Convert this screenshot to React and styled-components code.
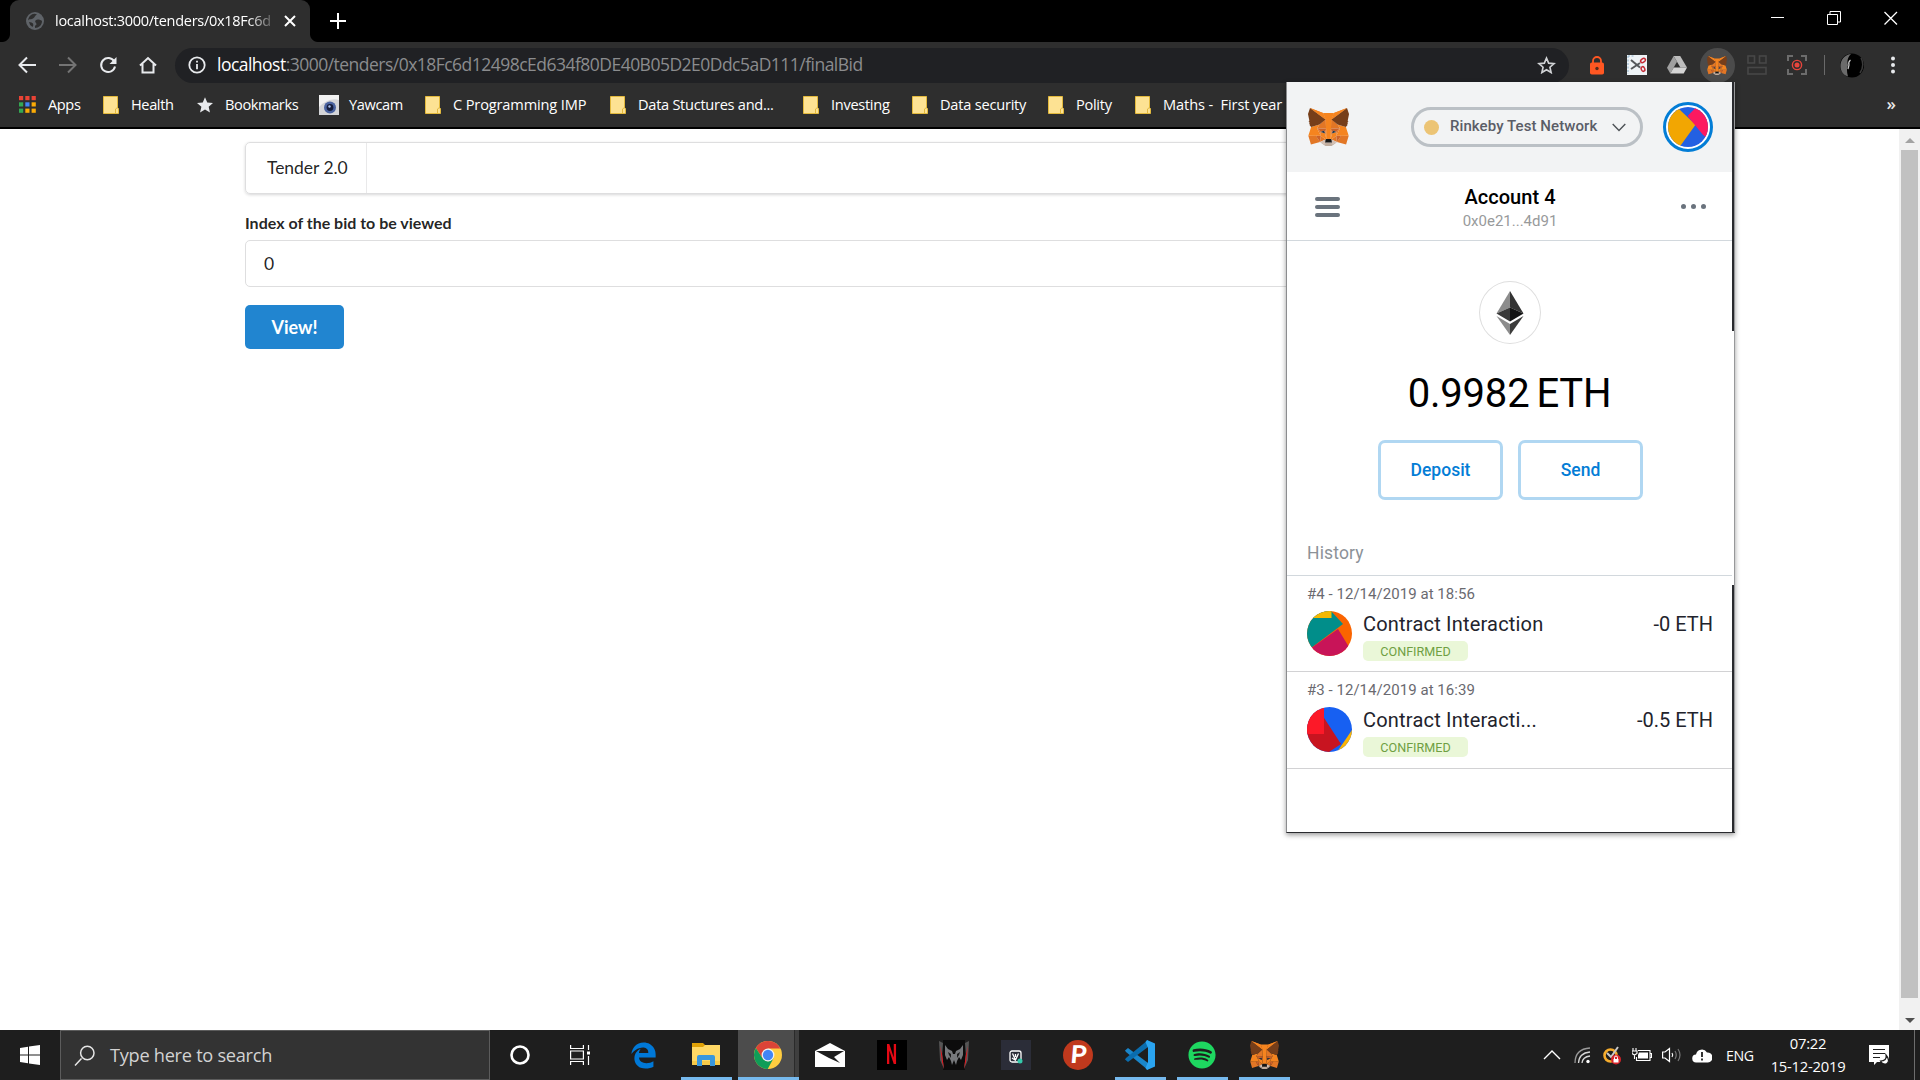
import React from "react";
import styled, { createGlobalStyle } from "styled-components";
import { FaEdgeLegacy, FaSpotify } from "react-icons/fa";

const UI = `"Open Sans", "Noto Sans", sans-serif`;

const GlobalStyle = createGlobalStyle`
  * { box-sizing: border-box; }
  html, body { margin: 0; padding: 0; background: #fff; overflow: hidden; }
  button, input { font: inherit; }
  svg { display: block; flex: none; }
`;

const Screen = styled.div`
  position: relative;
  width: 1920px;
  height: 1080px;
  display: flex;
  flex-direction: column;
  overflow: hidden;
  font-family: ${UI};
`;

/* ---------- browser chrome ---------- */

const TabStrip = styled.div`
  height: 42px;
  background: #000;
  display: flex;
  justify-content: space-between;
  padding-left: 2px;
`;

const TabGroup = styled.div`
  display: flex;
  align-items: stretch;
`;

const TabCurve = styled.div`
  width: 8px;
  height: 8px;
  align-self: flex-end;
  background: radial-gradient(circle at ${(p) => (p.$right ? "100% 0" : "0 0")}, #000 7.5px, #2e2e2e 8.5px);
`;

const Tab = styled.div`
  width: 300px;
  display: flex;
  align-items: center;
  padding: 0 11px 0 16px;
  background: #2e2e2e;
  border-radius: 9px 9px 0 0;
`;

const TabTitle = styled.div`
  width: 220px;
  margin: 0 9px 0 11px;
  white-space: nowrap;
  color: #fff;
  font-size: 14.5px;
  letter-spacing: -0.28px;
  line-height: 20px;
  padding-bottom: 1px;
  mask-image: linear-gradient(90deg, #000 88%, rgba(0, 0, 0, 0.1));
`;

const NewTab = styled.div`
  display: flex;
  align-items: center;
  padding-left: 12px;
`;

const WindowControls = styled.div`
  display: flex;
  padding-top: 11px;
  gap: 43px;
  padding-right: 22px;
`;

const Toolbar = styled.div`
  height: 46px;
  background: #2e2e2e;
  display: flex;
  align-items: center;
  padding-left: 17px;
`;

const NavButtons = styled.div`
  display: flex;
  gap: 21px;
  width: 158px;
`;

const Omnibox = styled.div`
  width: 1394px;
  height: 35px;
  border-radius: 18px;
  background: #202124;
  display: flex;
  align-items: center;
  padding: 0 13px 0 13px;
`;

const Url = styled.div`
  flex: 1;
  margin-left: 11px;
  padding-bottom: 2px;
  font-size: 17.5px;
  line-height: 24px;
  letter-spacing: ${(p) => p.$track};
  white-space: pre;
  color: #8b8c8e;
  b { font-weight: 400; color: #fff; }
`;

const Extensions = styled.div`
  display: flex;
  align-items: center;
  margin-left: 8px;
`;

const ExtensionSlot = styled.div`
  width: 40px;
  height: 35px;
  display: grid;
  place-items: center;
`;

const ActiveCircle = styled.div`
  width: 35px;
  height: 35px;
  border-radius: 50%;
  background: #4b4b4b;
  display: grid;
  place-items: center;
`;

const Divider = styled.div`
  width: 1px;
  height: 20px;
  background: #6a6a6a;
  margin: 0 15px 0 7px;
`;

const ProfileMenu = styled.div`
  display: flex;
  align-items: center;
  gap: 26px;
`;

const BookmarksBar = styled.div`
  height: 41px;
  background: #2e2e2e;
  border-bottom: 2px solid #000;
  display: flex;
  align-items: center;
  padding: 0 24px 6px 19px;
`;

const Bookmark = styled.div`
  display: flex;
  align-items: center;
  gap: ${(p) => p.$gap || 12}px;
  margin-right: 22px;
`;

const BookmarkLabel = styled.span`
  width: ${(p) => p.$w}px;
  padding-bottom: 1px;
  white-space: pre;
  color: #fff;
  font-size: 14.6px;
  letter-spacing: ${(p) => p.$track ?? -0.4}px;
  line-height: 20px;
`;

const Overflow = styled.span`
  margin-left: auto;
  color: #e8e8e8;
  font-size: 17px;
  line-height: 20px;
  font-weight: 600;
  padding-bottom: 2px;
`;

/* ---------- web page ---------- */

const Viewport = styled.main`
  height: 901px;
  background: #fff;
  display: flex;
  justify-content: space-between;
`;

const Page = styled.div`
  width: 1409px;
  margin-left: 245px;
  padding-top: 13px;
  font-family: Lato, sans-serif;
  color: rgba(0, 0, 0, 0.87);
`;

const Menu = styled.nav`
  height: 52px;
  border: 1px solid #dededf;
  border-radius: 5px;
  box-shadow: 0 1px 3px rgba(34, 36, 38, 0.18);
  display: flex;
`;

const MenuItem = styled.a`
  width: 121px;
  border-right: 1px solid #e9e9ea;
  display: flex;
  align-items: center;
  padding: 0 0 2px 21px;
  font-size: 17.5px;
  letter-spacing: -0.05px;
`;

const FieldLabel = styled.label`
  display: block;
  margin-top: 19px;
  height: 27px;
  line-height: 20px;
  font-size: 16px;
  font-weight: 700;
`;

const Field = styled.div`
  height: 47px;
  border: 1px solid #dededf;
  border-radius: 5px;
  display: flex;
  align-items: center;
  padding-left: 18px;
  font-size: 17.5px;
`;

const PrimaryButton = styled.button`
  margin-top: 18px;
  width: 99px;
  height: 44px;
  border: 0;
  border-radius: 5px;
  background: #2185d0;
  color: #fff;
  font-size: 18px;
  font-weight: 700;
`;

const Scrollbar = styled.div`
  width: 21px;
  background: #f1f1f1;
  display: flex;
  flex-direction: column;
  align-items: center;
  padding: 9px 0 7px;
`;

const ScrollThumb = styled.div`
  width: 17px;
  height: 848px;
  margin: 7px 0 auto;
  background: #c1c1c1;
`;

/* ---------- wallet popup ---------- */

const Popup = styled.section`
  position: absolute;
  left: 1286px;
  top: 82px;
  width: 449px;
  height: 751px;
  display: flex;
  background: #fff;
  border-left: 1px solid #8b8c8e;
  border-bottom: 1px solid #292a2e;
  box-shadow: 0 2px 5px rgba(0, 0, 0, 0.4);
  font-family: Roboto, sans-serif;
`;

const PopupBody = styled.div`
  width: 445px;
  display: flex;
  flex-direction: column;
`;

const PopupEdge = styled.div`
  width: 3px;
  display: flex;
  flex-direction: column;
`;

const EdgePiece = styled.div`
  height: ${(p) => p.$h}px;
  background: ${(p) => (p.$dark ? "#292a2e" : "#fff")};
  border-right: 1px solid #97989a;
`;

const WalletHeader = styled.header`
  height: 90px;
  background: #f2f3f4;
  display: flex;
  align-items: center;
  padding: 0 19px 0 21px;
`;

const NetworkPill = styled.div`
  width: 232px;
  height: 40px;
  margin: 0 20px 0 auto;
  border: 3px solid #bbc0c5;
  border-radius: 20px;
  display: flex;
  align-items: center;
  padding: 0 14px 0 10px;
  color: #5b5d67;
  font-size: 15px;
  font-weight: 500;
  span { margin: -3px auto 0 11px; letter-spacing: 0.08px; }
`;

const NetworkDot = styled.i`
  width: 15px;
  height: 15px;
  border-radius: 50%;
  background: #ecc475;
`;

const AvatarRing = styled.div`
  width: 50px;
  height: 50px;
  border-radius: 50%;
  border: 3px solid #037dd6;
  background: #fff;
  display: grid;
  place-items: center;
`;

const AccountBar = styled.div`
  height: 69px;
  border-bottom: 1px solid #d2d8dd;
  display: flex;
  align-items: center;
  justify-content: space-between;
  padding: 0 26px 0 28px;
`;

const AccountInfo = styled.div`
  text-align: center;
  padding: 4px 1px 0 0;
`;

const AccountName = styled.div`
  color: #000;
  font-size: 20px;
  line-height: 25px;
  font-weight: 500;
  letter-spacing: 0.05px;
`;

const AccountAddress = styled.div`
  color: #989a9b;
  font-size: 15px;
  line-height: 22px;
`;

const Dots = styled.div`
  display: flex;
  gap: 5px;
  i { width: 5px; height: 5px; border-radius: 50%; background: #6a737d; }
`;

const Bars = styled.div`
  display: flex;
  flex-direction: column;
  gap: 4px;
  padding-top: 1px;
  i { width: 25px; height: 4px; border-radius: 2px; background: #6a737d; }
`;

const BalanceArea = styled.div`
  display: flex;
  flex-direction: column;
  align-items: center;
  padding-top: 40px;
`;

const TokenCircle = styled.div`
  width: 62px;
  height: 63px;
  border: 1px solid #dedede;
  border-radius: 50%;
  display: grid;
  place-items: center;
`;

const Balance = styled.div`
  margin-top: 25px;
  display: flex;
  gap: 7px;
  color: #000;
  font-size: 40px;
  letter-spacing: -0.2px;
  line-height: 50px;
`;

const Actions = styled.div`
  display: flex;
  gap: 15px;
  margin: 21px 0 0 2px;
`;

const ActionButton = styled.button`
  width: 125px;
  height: 60px;
  background: #fff;
  border: 3px solid #b0d7f2;
  border-radius: 7px;
  color: #037dd6;
  font-size: 17.5px;
  font-weight: 500;
  padding: 0;
`;

const HistoryTitle = styled.h2`
  margin: 41px 0 0;
  height: 35px;
  border-bottom: 1px solid #d2d8dd;
  padding-left: 20px;
  color: #8c9298;
  font-size: 17.5px;
  font-weight: 400;
  letter-spacing: 0.15px;
  line-height: 24px;
`;

const Transaction = styled.article`
  height: ${(p) => p.$h}px;
  border-bottom: 1px solid #d2d2d4;
  padding: 8px 19px 0 20px;
`;

const TxDate = styled.div`
  color: #6a6a70;
  font-size: 15px;
  letter-spacing: 0.04px;
  line-height: 20px;
`;

const TxRow = styled.div`
  display: flex;
  margin-top: 7px;
`;

const TxInfo = styled.div`
  flex: 1;
  margin-left: 11px;
`;

const TxName = styled.div`
  padding-top: 1px;
  color: #22232c;
  font-size: 20px;
  line-height: 25px;
  letter-spacing: 0.2px;
`;

const TxStatus = styled.div`
  margin-top: 4px;
  width: 105px;
  height: 20px;
  border-radius: 5px;
  background: #eaf7d8;
  color: #6f9f43;
  font-size: 12.6px;
  line-height: 21px;
  text-align: center;
`;

const TxAmount = styled(TxName)`
  letter-spacing: 0;
`;

/* ---------- taskbar ---------- */

const Taskbar = styled.footer`
  height: 50px;
  background: #1e1e1e;
  display: flex;
`;

const TaskButton = styled.div`
  width: ${(p) => p.$w || 62}px;
  padding-right: ${(p) => p.$inset || 0}px;
  display: grid;
  place-items: center;
`;

const AppButton = styled(TaskButton)`
  background: ${(p) => (p.$active ? "linear-gradient(90deg, #4c4c4c 56px, #2b2b2b 56px, #2b2b2b 57px, #3f3f3f 57px) no-repeat 1px 0 / 61px 50px" : "none")};
  grid-template-rows: 47px 3px;
  &::after {
    content: "";
    height: 3px;
    width: ${(p) => (p.$active ? 61 : 51)}px;
    background: ${(p) => (p.$open || p.$active ? "#76b9ed" : "transparent")};
    margin-left: ${(p) => (p.$active ? 1 : 0)}px;
  }
  svg, div { margin-top: 3px; }
`;

const SearchBox = styled.div`
  width: 430px;
  border: 1px solid #5c5c5c;
  background: #333;
  display: flex;
  align-items: center;
  gap: 15px;
  padding-left: 13px;
  color: #d2d2d2;
  font-size: 18.2px;
  letter-spacing: -0.28px;
`;

const AppTile = styled.div`
  width: 30px;
  height: 30px;
  display: grid;
  place-items: center;
  overflow: hidden;
  border-radius: ${(p) => p.$round || "0"};
  background: ${(p) => p.$bg};
`;

const TileLetter = styled.span`
  display: block;
  color: ${(p) => p.$color};
  font: ${(p) => p.$font};
  line-height: 30px;
  transform: ${(p) => p.$transform};
`;

const Tray = styled.div`
  margin-left: auto;
  display: flex;
  align-items: center;
  color: #fff;
`;

const TraySlot = styled.div`
  width: 30px;
  display: grid;
  place-items: center;
`;

const Language = styled.span`
  width: 38px;
  padding-left: 9px;
  font-size: 14.2px;
  letter-spacing: -0.35px;
`;

const Clock = styled.div`
  width: 106px;
  text-align: center;
  font-size: 14.8px;
  line-height: 23px;
  letter-spacing: -0.25px;
`;

const Notifications = styled.div`
  width: 53px;
  padding-right: 17px;
  display: grid;
  place-items: center;
`;

const PeekLine = styled.div`
  width: 6px;
  height: 50px;
  border-left: 1px solid #6d6d6d;
`;

/* ---------- drawings ---------- */

const Fox = ({ width, height }) => (
  <svg width={width} height={height} viewBox="1 1 33.6 31.1" preserveAspectRatio="none">
    <path d="M32.96 1L19.82 10.72L22.27 4.99Z" fill="#E17726" />
    <path d="M2.66 1L15.68 10.81L13.35 4.99Z" fill="#E27625" />
    <path d="M28.23 23.53L24.73 28.87L32.22 30.93L34.36 23.65ZM1.27 23.65L3.4 30.93L10.87 28.87L7.39 23.53ZM10.47 14.51L8.39 17.65L15.8 17.99L15.55 9.98ZM25.15 14.51L19.99 9.89L19.82 17.99L27.23 17.65ZM10.87 28.87L15.36 26.71L11.5 23.7ZM20.27 26.71L24.73 28.87L24.12 23.7Z" fill="#E27625" />
    <path d="M24.73 28.87L20.27 26.71L20.63 29.61L20.59 30.84ZM10.87 28.87L15.03 30.84L15 29.61L15.36 26.71Z" fill="#D5BFB2" />
    <path d="M10.87 28.87L11.52 23.53L7.39 23.65ZM24.1 23.53L24.73 28.87L28.23 23.65ZM27.23 17.65L19.82 17.99L20.51 21.78L21.6 19.49L24.24 20.7ZM11.39 20.7L14.02 19.49L15.11 21.78L15.8 17.99L8.39 17.65Z" fill="#CC6228" />
    <path d="M8.39 17.65L11.5 23.7L11.39 20.7ZM24.24 20.7L24.12 23.7L27.23 17.65ZM15.8 17.99L15.11 21.78L15.98 26.27L16.17 20.36ZM19.82 17.99L19.46 20.35L19.64 26.27L20.51 21.78Z" fill="#E27525" />
    <path d="M20.51 21.78L19.64 26.27L20.27 26.71L24.12 23.7L24.24 20.7ZM11.39 20.7L11.5 23.7L15.36 26.71L15.98 26.27L15.11 21.78Z" fill="#F5841F" />
    <path d="M15.11 21.78L11.39 20.7L14.02 19.49ZM20.51 21.78L21.6 19.49L24.24 20.7Z" fill="#233447" />
    <path d="M20.59 30.84L20.63 29.61L20.29 29.33H15.33L15 29.61L15.03 30.84L10.87 28.87L12.33 30.06L15.28 32.1H20.34L23.31 30.06L24.73 28.87Z" fill="#C0AC9D" />
    <path d="M20.27 26.71L19.64 26.27H15.98L15.36 26.71L15 29.61L15.33 29.33H20.29L20.63 29.61Z" fill="#161616" />
    <path d="M32.05 16.52L25.15 14.51L27.23 17.65L24.12 23.7L28.23 23.65H34.36ZM10.47 14.51L3.57 16.52L1.27 23.65H7.39L11.5 23.7L8.39 17.65ZM19.82 17.99L20.27 10.39L22.27 4.99H13.35L15.36 10.39L15.8 17.99L15.97 20.37V26.27H19.64L19.66 20.37Z" fill="#F5841F" />
    <path d="M33.52 11.35L34.62 5.99L32.96 1L20.27 10.39L25.15 14.51L32.05 16.52L33.57 14.75L32.91 14.27L33.96 13.31L33.15 12.69L34.21 11.88ZM1 5.99L2.12 11.35L1.4 11.88L2.47 12.69L1.66 13.31L2.71 14.27L2.05 14.75L3.57 16.52L10.47 14.51L15.36 10.39L2.66 1Z" fill="#763E1A" />
    <path d="M32.96 1L20.27 10.39L22.27 4.99ZM2.66 1L15.36 10.39L13.35 4.99Z" fill="#F5841F" />
  </svg>
);

const FolderMark = () => (
  <svg width="16" height="18" viewBox="0 0 16 18">
    <path d="M.5.5H14.5V12L15.5 12.5V17.5H.5Z" fill="#fde293" stroke="#e3b93c" />
    <path d="M12.5 17.5V13L14.5 11.5" fill="none" stroke="#e3b93c" />
  </svg>
);

const AppsMark = () => {
  const colors = ["#ea4335", "#ea4335", "#ea4335", "#34a853", "#4285f4", "#fbab05", "#34a853", "#fbab05", "#fbab05"];
  return (
    <svg width="17" height="17" viewBox="0 0 17 17">
      {colors.map((c, i) => (
        <rect key={i} x={(i % 3) * 6.3} y={Math.floor(i / 3) * 6.3} width="4.2" height="4.2" fill={c} />
      ))}
    </svg>
  );
};

const StarMark = () => (
  <svg width="16" height="16" viewBox="2 2 20 19.5">
    <path d="M12 17.3L18.2 21l-1.6-7L22 9.2l-7.2-.6L12 2 9.200 8.600 2 9.200 7.500 14 5.800 21z" fill="#e8eaed" />
  </svg>
);

const CameraMark = () => (
  <svg width="20" height="20" viewBox="0 0 20 20">
    <rect width="20" height="20" fill="#d4d5d8" />
    <path d="M0 0H20V5Q10 2 0 12Z" fill="#f2f2f2" />
    <circle cx="11" cy="12.500" r="6" fill="#4a63a0" />
    <circle cx="11" cy="12.500" r="3.400" fill="#151d3c" />
    <circle cx="10.500" cy="11.500" r="1.200" fill="#a9c0ee" />
  </svg>
);

const Identicon = ({ size, base, shapes, id }) => (
  <svg width={size} height={size} viewBox="0 0 45 45">
    <clipPath id={id}><circle cx="22.5" cy="22.5" r="22.5" /></clipPath>
    <g clipPath={`url(#${id})`}>
      <rect width="45" height="45" fill={base} />
      {shapes.map(([d, fill]) => <path key={d} d={d} fill={fill} />)}
    </g>
  </svg>
);

const Ether = () => (
  <svg width="28" height="44" viewBox="0 0 28 44">
    <path d="M14 0V16.500L.5 22.500Z" fill="#8c8c8c" />
    <path d="M14 0L27.500 22.500L14 16.500Z" fill="#343434" />
    <path d="M.5 22.500L14 16.500V30.500Z" fill="#393939" />
    <path d="M14 16.500L27.500 22.500L14 30.500Z" fill="#141414" />
    <path d="M.5 25L14 33V44Z" fill="#8c8c8c" />
    <path d="M14 33L27.500 25L14 44Z" fill="#3c3c3b" />
  </svg>
);

const Stroke = ({ w, h, d, color = "#fff", sw = 1, ...rest }) => (
  <svg width={w} height={h} viewBox={`0 0 ${w} ${h}`} fill="none" stroke={color} strokeWidth={sw} {...rest}>
    <path d={d} />
  </svg>
);

const Globe = () => (
  <svg width="18" height="18" viewBox="0 0 18 18">
    <circle cx="9" cy="9" r="9" fill="#5f6368" />
    <path d="M2 8.500C3 6 5 8 7 6.500S9 3.500 11 2.500C7 0 2.500 4 2 8.500ZM16 9C14 7.500 11 7 9.500 8.500S12 12 10 13 9.500 15 9 16C13 16 16 13 16 9ZM3 10Q6 10 7 11.500T6.500 15Q3.500 13.500 3 10Z" fill="#2e2e2e" />
  </svg>
);

const Reload = () => (
  <svg width="18" height="18" viewBox="0 0 18 18" fill="none" stroke="#e8eaed" strokeWidth="2">
    <path d="M15.200 5.500A7 7 0 1 0 16 10.500" />
    <path d="M17.500 1V8H10.500Z" fill="#e8eaed" stroke="none" />
  </svg>
);

const Info = () => (
  <svg width="18" height="18" viewBox="0 0 18 18" fill="none" stroke="#e8eaed" strokeWidth="1.800">
    <circle cx="9" cy="9" r="7.700" />
    <path d="M9 8V13.200M9 4.800V6.600" />
  </svg>
);

const Padlock = () => (
  <svg width="16" height="19" viewBox="0 0 16 19">
    <path d="M4 8V5a4 4 0 0 1 8 0V8" fill="none" stroke="#ff5722" strokeWidth="1.800" />
    <rect x="1" y="6.500" width="14" height="12" rx="1.800" fill="#ff5722" />
    <circle cx="8" cy="12.500" r="1.700" fill="#5a2a1c" />
  </svg>
);

const Scissors = () => (
  <svg width="20" height="20" viewBox="0 0 20 20" fill="none">
    <rect width="20" height="20" fill="#eef3f6" />
    <path d="M1 1H7M1 1V19" stroke="#8eb1cb" strokeDasharray="2 1.500" />
    <path d="M4 5L13 12.500M4 14L13 8" stroke="#54585c" strokeWidth="2" />
    <ellipse cx="16" cy="5.500" rx="2.600" ry="1.800" transform="rotate(-35 16 5.500)" stroke="#c42b36" strokeWidth="1.500" />
    <ellipse cx="16" cy="14" rx="1.700" ry="2.400" transform="rotate(-25 16 14)" stroke="#c42b36" strokeWidth="1.500" />
  </svg>
);

const DriveMark = () => (
  <svg width="20" height="18" viewBox="0 0 20 18">
    <path d="M6.600 0H13.200L20 11.500H13.400Z" fill="#bdbdbd" />
    <path d="M6.600 0L10 5.800L3.300 17.500L0 11.800Z" fill="#a0a0a0" />
    <path d="M6.800 11.500H20L16.700 17.500H3.300Z" fill="#d4d4d4" />
  </svg>
);

const GridMark = () => (
  <svg width="20" height="20" viewBox="0 0 20 20" fill="none" stroke="#474747" strokeWidth="1.600">
    <rect x="1" y="1" width="6.500" height="7" />
    <rect x="12.500" y="1" width="6.500" height="7" />
    <rect x="1" y="12.500" width="18" height="6.500" />
  </svg>
);

const TargetMark = () => (
  <svg width="20" height="20" viewBox="0 0 20 20" fill="none" stroke="#6c6c6c" strokeWidth="2">
    <path d="M1 6V1H6M14 1H19V6M19 14V19H14M6 19H1V14" />
    <circle cx="10" cy="10" r="4.600" stroke="#e8453c" strokeWidth="1.400" />
    <circle cx="10" cy="10" r="2.500" fill="#e8453c" stroke="none" />
  </svg>
);

const ProfilePhoto = () => (
  <svg width="24" height="25" viewBox="0 0 24 25">
    <circle cx="12" cy="12.500" r="12" fill="#000" />
    <path d="M11 1C-2 3-3 20 8 23.500Q6 17 8 12Q6 6 11 1Z" fill="#6b6b6b" />
    <path d="M10.500 7Q8 9 9 12L8 16" stroke="#ccc" strokeWidth="1.200" fill="none" />
    <path d="M21 5Q25 12 20 20" stroke="#3b3b3b" strokeWidth="1.500" fill="none" />
  </svg>
);

const StarOutline = () => (
  <svg width="19" height="18" viewBox="1 1 22 21">
    <path d="M12 3.500L14.500 9.300L20.800 9.900L16 14.100L17.400 20.300L12 17L6.600 20.300L8 14.100L3.200 9.900L9.500 9.300Z" fill="none" stroke="#d0d2d5" strokeWidth="1.900" />
  </svg>
);

const Explorer = () => (
  <svg width="28" height="24" viewBox="0 0 28 24">
    <path d="M0 0H11L13 2V6H0Z" fill="#e0a106" />
    <path d="M0 4H11L13 2H28V22H0Z" fill="#ffd865" />
    <path d="M0 18H28V22H0Z" fill="#f7c948" />
    <path d="M5 23V14Q5 12 7 12H21Q23 12 23 14V23H18V17H10V23Z" fill="#3a97dd" />
  </svg>
);

const Chrome = () => (
  <svg width="28" height="28" viewBox="0 0 48 48">
    <circle cx="24" cy="24" r="24" fill="#ffcd40" />
    <path d="M24 13H45.300A24 24 0 0 0 3.200 12L14.500 29.500Z" fill="#db4437" />
    <path d="M3.200 12L14.500 29.500L24 35L33.500 29.500L23.500 48A24 24 0 0 1 3.200 12Z" fill="#0f9d58" />
    <circle cx="24" cy="24" r="11" fill="#f1f1f1" />
    <circle cx="24" cy="24" r="8.800" fill="#4285f4" />
  </svg>
);

const MailMark = () => (
  <svg width="30" height="24" viewBox="0 0 30 24">
    <path d="M0 8L15 0L30 8V24H0Z" fill="#fff" />
    <path d="M1 8H29L19 14L25 20L14 15Z" fill="#1e1e1e" />
  </svg>
);

const Predator = () => (
  <svg width="30" height="30" viewBox="0 0 30 30">
    <rect x="4" width="22" height="30" fill="#0c0c0c" />
    <path d="M0 1L4 3L3 14L5 29L1 20ZM30 1L26 3L27 14L25 29L29 20Z" fill="#555" />
    <path d="M1 6L3 22L5 29L3 14ZM29 6L27 22L25 29L27 14Z" fill="#e3151d" />
    <path d="M6 5L9 9L13 11L14 14H16L17 11L21 9L24 5V15L22 20L20 17L18 21L17 25L15 20L13 25L12 21L10 17L8 20L6 15Z" fill="#77797c" />
    <path d="M9 12L12 14V18L10 15ZM21 12L18 14V18L20 15Z" fill="#1a1a1a" />
  </svg>
);

const VoiceMark = () => (
  <svg width="14" height="14" viewBox="0 0 14 14" fill="none" stroke="#fff" strokeWidth="1.300">
    <rect x="1" y="1" width="11" height="11" rx="2" />
    <path d="M3.500 3.500L6.500 10L9.500 3.500M3 8L6 10M6.500 4V7" />
    <circle cx="11" cy="11" r="2.500" fill="#35c9ab" stroke="none" />
  </svg>
);

const Code = () => (
  <svg width="30" height="30" viewBox="0 0 30 30">
    <path d="M0 10.500L3 8L23 23V30L1 12Z" fill="#1a86ca" />
    <path d="M0 19.500L3 22L23 7V0L1 18Z" fill="#0a6cad" />
    <path d="M22 0L30 3.500V26.500L22 30L20.500 28L23 22V8L20.500 2Z" fill="#2aa4f0" />
  </svg>
);

const WindowsMark = () => (
  <svg width="20" height="20" viewBox="0 0 20 20" fill="#fff">
    <path d="M0 3L8 1.800V9.500H0ZM9 1.600L20 0V9.500H9ZM0 10.500H8V18.200L0 17ZM9 10.500H20V20L9 18.400Z" />
  </svg>
);

const TaskView = () => (
  <svg width="20" height="20" viewBox="0 0 20 20" fill="none" stroke="#fff" strokeWidth="1.200">
    <path d="M.6 0V3.500H13.400V0M.6 6H13.400V14H.6ZM.6 20V16.500H13.400V20M18.500 0V5M18.500 11V20" />
    <path d="M17 6.500H20V9.500H17Z" fill="#fff" stroke="none" />
  </svg>
);

const Wifi = () => (
  <svg width="17" height="17" viewBox="0 0 17 17" fill="none" stroke="#d7d7d7" strokeWidth="1.300">
    <path d="M1 16Q1 2 16 1" stroke="#9a9a9a" />
    <path d="M4.500 16Q5 6 16 5M8 16Q8.500 10 16 9" />
    <circle cx="14" cy="14.500" r="1.700" fill="#fff" stroke="none" />
  </svg>
);

const Shield = () => (
  <svg width="18" height="19" viewBox="0 0 18 19" fill="none">
    <circle cx="7.500" cy="9.500" r="6" stroke="#f5ac2d" strokeWidth="2.600" />
    <path d="M4 7L8 11L15 1" stroke="#c9c9c9" strokeWidth="2" />
    <circle cx="13" cy="13.500" r="5" fill="#d8232a" />
    <path d="M10.500 13H15.500V16.500H10.500Z" fill="#fff" />
    <path d="M11.500 13V11.500A1.500 1.500 0 0 1 14.500 11.500V13" stroke="#fff" strokeWidth="1" />
  </svg>
);

const Battery = () => (
  <svg width="20" height="14" viewBox="0 0 20 14" fill="none" stroke="#fff" strokeWidth="1.100">
    <path d="M6 2.500H18V12.500H4.500V9M18 5.500H19.500V9.500H18" />
    <path d="M7 4.500H16V10.500H6V7Z" fill="#fff" stroke="none" />
    <path d="M1 0V3M4 0V3M0 3H5V5.500L2.500 7L0 5.500ZM2.500 7V11" />
  </svg>
);

const Speaker = () => (
  <svg width="20" height="18" viewBox="0 0 20 18" fill="none" stroke="#fff" strokeWidth="1.200">
    <path d="M.6 6H3L7.500 2.500V15.500L3 12H.6ZM10 7Q11.500 9 10 11" />
    <path d="M13 5Q15.500 9 13 13M16 3Q20 9 16 15" stroke="#777" />
  </svg>
);

const CloudMark = () => (
  <svg width="20" height="15" viewBox="0 0 20 15">
    <path d="M4.500 14.500A4 4 0 0 1 4 6.500A6 6 0 0 1 15 4.500A4.800 4.800 0 0 1 16 14.500Z" fill="#fff" />
    <path d="M10 4V9M10 10.500V12.500" stroke="#1e1e1e" strokeWidth="1.800" />
  </svg>
);

const NoteMark = () => (
  <svg width="20" height="20" viewBox="0 0 20 20" fill="none">
    <path d="M0 0H20V17H8L5 20V17H0Z" fill="#fff" />
    <path d="M4 4.500H16M4 8.500H16M4 12.500H11" stroke="#1e1e1e" strokeWidth="1.200" />
    <path d="M17 10Q18 16 11.500 16Q14 20.500 18 18.500Q21.500 15.500 17 10Z" fill="#fff" stroke="#1e1e1e" strokeWidth="1.200" />
  </svg>
);

const FOLDER = <FolderMark />;
const bookmarks = [
  { label: "Apps", w: 33, icon: <AppsMark /> },
  { label: "Health", w: 44, icon: FOLDER },
  { label: "Bookmarks", w: 72, icon: <StarMark /> },
  { label: "Yawcam", w: 54, icon: <CameraMark />, gap: 10 },
  { label: "C Programming IMP", w: 135, icon: FOLDER, track: -0.15 },
  { label: "Data Stuctures and...", w: 143, icon: FOLDER, track: -0.28 },
  { label: "Investing", w: 59, icon: FOLDER, track: -0.3 },
  { label: "Data security", w: 86, icon: FOLDER, track: -0.22 },
  { label: "Polity", w: 37, icon: FOLDER, track: -0.3 },
  { label: "Maths -  First year", w: 118, icon: FOLDER, track: -0.1 },
];

const transactions = [
  {
    id: "tx4", h: 96, date: "#4 - 12/14/2019 at 18:56", name: "Contract Interaction", amount: "-0 ETH",
    base: "#fa6400",
    shapes: [["M0 0H24L36 13L0 40Z", "#018e8a"], ["M0 40L31 18L45 41V45H0Z", "#c81458"], ["M0 0H24.500V7H0Z", "#f5b800"]],
  },
  {
    id: "tx3", h: 97, date: "#3 - 12/14/2019 at 16:39", name: "Contract Interacti...", amount: "-0.5 ETH",
    base: "#1760f2",
    shapes: [["M0 0H10L34 37L22 45H0Z", "#c81420"], ["M0 0H17V27H0Z", "#fc1928"], ["M45 23L30 45H45Z", "#fbb403"]],
  },
];

const PILLS = [["M0 0H10L31 20L13 45H0Z", "#f2a602"], ["M22 10L32 0H45V36L39 31Z", "#fc1960"]];

export default function App() {
  return (
    <Screen>
      <GlobalStyle />
      <TabStrip>
        <TabGroup>
          <TabCurve />
          <Tab>
            <Globe />
            <TabTitle>localhost:3000/tenders/0x18Fc6d</TabTitle>
            <Stroke w={12} h={12} d="M1 1L11 11M11 1L1 11" sw={2} />
          </Tab>
          <TabCurve $right />
          <NewTab><Stroke w={16} h={16} d="M8 0V16M0 8H16" sw={2} /></NewTab>
        </TabGroup>
        <WindowControls>
          <Stroke w={14} h={14} d="M1 6.500H14" />
          <Stroke w={14} h={14} d="M.5 3.5H10.500V13.500H.5ZM3 3V.5H13.500V11H11" />
          <Stroke w={14} h={14} d="M.5 1L13 13.500M13 1L.5 13.500" sw={1.3} />
        </WindowControls>
      </TabStrip>

      <Toolbar>
        <NavButtons>
          <Stroke w={20} h={18} d="M19 9H3M10 1.500L2.500 9L10 16.500" color="#e8eaed" sw={2} />
          <Stroke w={20} h={18} d="M1 9H17M10 1.500L17.500 9L10 16.500" color="#747474" sw={2} />
          <Reload />
          <Stroke w={20} h={18} d="M2 9.500L10 2L18 9.500M4.500 8V16.500H15.500V8" color="#e8eaed" sw={2} />
        </NavButtons>
        <Omnibox>
          <Info />
          <Url $track="-0.52px"><b>localhost</b>:3000/tenders/0x18Fc6d12498cEd634f80DE40B05D2E0Ddc5aD111/finalBid</Url>
          <StarOutline />
        </Omnibox>
        <Extensions>
          <ExtensionSlot><Padlock /></ExtensionSlot>
          <ExtensionSlot><Scissors /></ExtensionSlot>
          <ExtensionSlot><DriveMark /></ExtensionSlot>
          <ExtensionSlot><ActiveCircle><Fox width={20} height={19} /></ActiveCircle></ExtensionSlot>
          <ExtensionSlot><GridMark /></ExtensionSlot>
          <ExtensionSlot><TargetMark /></ExtensionSlot>
        </Extensions>
        <Divider />
        <ProfileMenu>
          <ProfilePhoto />
          <svg width="6" height="18" viewBox="0 0 6 18" fill="#e8eaed">
            <circle cx="3" cy="2.500" r="2" /><circle cx="3" cy="9" r="2" /><circle cx="3" cy="15.500" r="2" />
          </svg>
        </ProfileMenu>
      </Toolbar>

      <BookmarksBar>
        {bookmarks.map((b) => (
          <Bookmark key={b.label} $gap={b.gap}>
            {b.icon}
            <BookmarkLabel $w={b.w} $track={b.track}>{b.label}</BookmarkLabel>
          </Bookmark>
        ))}
        <Overflow>»</Overflow>
      </BookmarksBar>

      <Viewport>
        <Page>
          <Menu><MenuItem>Tender 2.0</MenuItem></Menu>
          <FieldLabel>Index of the bid to be viewed</FieldLabel>
          <Field>0</Field>
          <PrimaryButton>View!</PrimaryButton>
        </Page>
        <Scrollbar>
          <svg width="10" height="5"><path d="M0 5L5 0L10 5Z" fill="#a3a3a3" /></svg>
          <ScrollThumb />
          <svg width="10" height="5"><path d="M0 0L5 5L10 0Z" fill="#505050" /></svg>
        </Scrollbar>
      </Viewport>

      <Taskbar>
        <TaskButton $w={60}><WindowsMark /></TaskButton>
        <SearchBox>
          <Stroke w={21} h={21} d="M7.500 13.500L1 20.500M20 8A6.700 6.700 0 1 1 6.600 8A6.700 6.700 0 1 1 20 8" color="#e6e6e6" sw={1.5} />
          Type here to search
        </SearchBox>
        <TaskButton $w={60}>
          <svg width="20" height="20"><circle cx="10" cy="10" r="8.500" fill="none" stroke="#fff" strokeWidth="2.600" /></svg>
        </TaskButton>
        <TaskButton $w={63} $inset={4}><TaskView /></TaskButton>
        <AppButton $inset={2}><FaEdgeLegacy size={27} color="#0078d7" /></AppButton>
        <AppButton $open><Explorer /></AppButton>
        <AppButton $active><Chrome /></AppButton>
        <AppButton><MailMark /></AppButton>
        <AppButton>
          <AppTile $bg="#000"><TileLetter $color="#e50914" $font="700 27px Roboto, sans-serif" $transform="scaleX(0.58)">N</TileLetter></AppTile>
        </AppButton>
        <AppButton><Predator /></AppButton>
        <AppButton><AppTile $bg="#2b2d38"><VoiceMark /></AppTile></AppButton>
        <AppButton>
          <AppTile $bg="#c0391d" $round="50%"><TileLetter $color="#fff" $font="700 25px Roboto, sans-serif" $transform="translateX(1px) skewX(-5deg)">P</TileLetter></AppTile>
        </AppButton>
        <AppButton $open><Code /></AppButton>
        <AppButton $open><FaSpotify size={28} color="#1ed760" /></AppButton>
        <AppButton $open><Fox width={29} height={28} /></AppButton>

        <Tray>
          <TraySlot><Stroke w={18} h={10} d="M1 9L9 1L17 9" sw={1.4} /></TraySlot>
          <TraySlot><Wifi /></TraySlot>
          <TraySlot><Shield /></TraySlot>
          <TraySlot><Battery /></TraySlot>
          <TraySlot><Speaker /></TraySlot>
          <TraySlot><CloudMark /></TraySlot>
          <Language>ENG</Language>
          <Clock>07:22<br />15-12-2019</Clock>
          <Notifications><NoteMark /></Notifications>
        </Tray>
        <PeekLine />
      </Taskbar>

      <Popup>
        <PopupBody>
          <WalletHeader>
            <Fox width={41} height={38} />
            <NetworkPill>
              <NetworkDot />
              <span>Rinkeby Test Network</span>
              <Stroke w={14} h={9} d="M.7 1L7 7.500L13.300 1" color="#4d5156" sw={1.4} />
            </NetworkPill>
            <AvatarRing><Identicon id="account" size={40} base="#2360e2" shapes={PILLS} /></AvatarRing>
          </WalletHeader>
          <AccountBar>
            <Bars><i /><i /><i /></Bars>
            <AccountInfo>
              <AccountName>Account 4</AccountName>
              <AccountAddress>0x0e21...4d91</AccountAddress>
            </AccountInfo>
            <Dots><i /><i /><i /></Dots>
          </AccountBar>
          <BalanceArea>
            <TokenCircle><Ether /></TokenCircle>
            <Balance><span>0.9982</span><span>ETH</span></Balance>
            <Actions>
              <ActionButton>Deposit</ActionButton>
              <ActionButton>Send</ActionButton>
            </Actions>
          </BalanceArea>
          <HistoryTitle>History</HistoryTitle>
          {transactions.map((t) => (
            <Transaction key={t.id} $h={t.h}>
              <TxDate>{t.date}</TxDate>
              <TxRow>
                <Identicon id={t.id} size={45} base={t.base} shapes={t.shapes} />
                <TxInfo>
                  <TxName>{t.name}</TxName>
                  <TxStatus>CONFIRMED</TxStatus>
                </TxInfo>
                <TxAmount>{t.amount}</TxAmount>
              </TxRow>
            </Transaction>
          ))}
        </PopupBody>
        <PopupEdge>
          <EdgePiece $h={249} $dark />
          <EdgePiece $h={254} />
          <EdgePiece $h={247} $dark />
        </PopupEdge>
      </Popup>
    </Screen>
  );
}
